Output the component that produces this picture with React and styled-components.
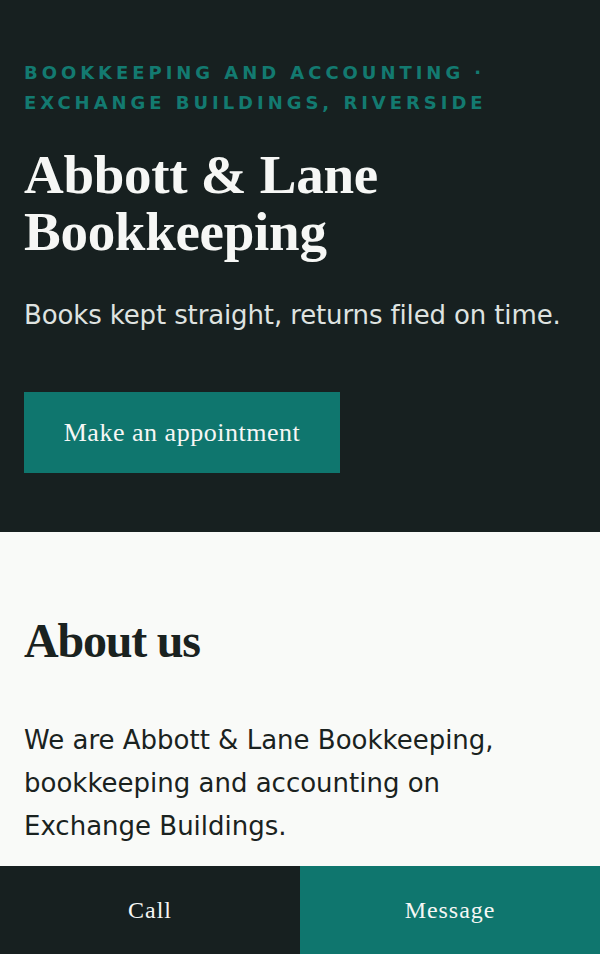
import React from "react";
import styled, { createGlobalStyle } from "styled-components";

const GlobalStyle = createGlobalStyle`
  html, body {
    margin: 0;
    padding: 0;
    background: #f9faf8;
  }
  * {
    box-sizing: border-box;
  }
`;

const Page = styled.div`
  min-height: 954px;
  padding-bottom: 88px;
  font-family: "DejaVu Sans", sans-serif;
`;

const Hero = styled.header`
  background: #172020;
  color: #f6f7f5;
  padding: 58px 24px 59px;
`;

const Eyebrow = styled.p`
  margin: 0;
  color: #137a70;
  font-family: "DejaVu Sans", sans-serif;
  font-weight: bold;
  font-size: 18px;
  line-height: 30px;
  letter-spacing: 0.22em;
  text-transform: uppercase;
`;

const Title = styled.h1`
  margin: 28px 0 0;
  font-family: "Liberation Serif", serif;
  font-weight: bold;
  font-size: 55px;
  line-height: 57px;
  letter-spacing: -0.005em;
`;

const Tagline = styled.p`
  margin: 36px 0 0;
  font-size: 26px;
  line-height: 38px;
  letter-spacing: -0.005em;
  color: #dfe3e0;
`;

const Button = styled.a`
  display: inline-flex;
  align-items: center;
  justify-content: center;
  margin-top: 58px;
  width: 316px;
  height: 81px;
  background: #0f766e;
  color: #f6f7f5;
  font-family: "Liberation Serif", serif;
  font-size: 26px;
  letter-spacing: 0.02em;
  text-decoration: none;
`;

const About = styled.section`
  background: #f9faf8;
  color: #1a2220;
  padding: 80px 24px 40px;
`;

const Heading = styled.h2`
  margin: 0;
  font-family: "Liberation Serif", serif;
  font-weight: bold;
  font-size: 48px;
  line-height: 58px;
  letter-spacing: -0.025em;
`;

const Body = styled.p`
  margin: 49px 0 0;
  max-width: 520px;
  font-size: 26px;
  line-height: 43px;
`;

const ActionBar = styled.nav`
  position: fixed;
  left: 0;
  right: 0;
  bottom: 0;
  height: 88px;
  display: grid;
  grid-template-columns: 1fr 1fr;
`;

const Action = styled.a`
  display: flex;
  align-items: center;
  justify-content: center;
  background: ${(p) => (p.$primary ? "#0f766e" : "#172020")};
  color: #f6f7f5;
  font-family: "Liberation Serif", serif;
  font-size: 24px;
  letter-spacing: 0.04em;
  text-decoration: none;
`;

export default function App() {
  return (
    <>
      <GlobalStyle />
      <Page>
        <Hero>
          <Eyebrow>Bookkeeping and accounting · Exchange Buildings, Riverside</Eyebrow>
          <Title>Abbott &amp; Lane Bookkeeping</Title>
          <Tagline>Books kept straight, returns filed on time.</Tagline>
          <Button href="#">Make an appointment</Button>
        </Hero>
        <About>
          <Heading>About us</Heading>
          <Body>
            We are Abbott &amp; Lane Bookkeeping, bookkeeping and accounting on
            Exchange Buildings.
          </Body>
        </About>
      </Page>
      <ActionBar>
        <Action href="#">Call</Action>
        <Action href="#" $primary>
          Message
        </Action>
      </ActionBar>
    </>
  );
}
